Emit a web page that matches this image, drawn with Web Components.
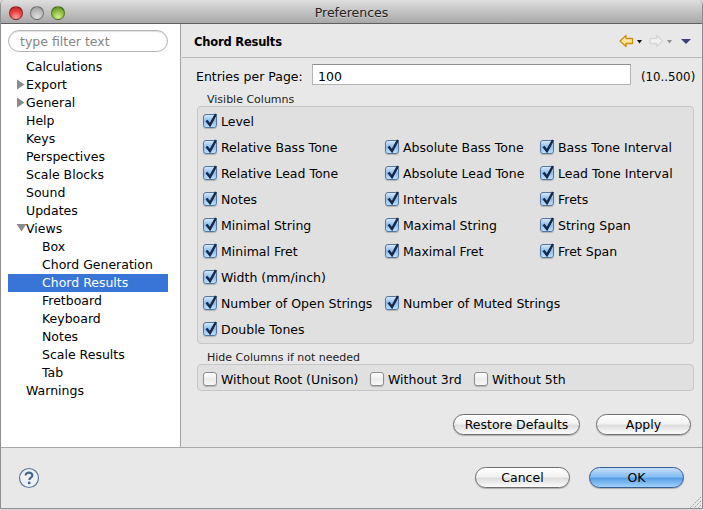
<!DOCTYPE html>
<html>
<head>
<meta charset="utf-8">
<title>Preferences</title>
<style>
  html, body { margin: 0; padding: 0; background: #fff; }
  body { font-family: "DejaVu Sans", sans-serif; font-size: 12.5px; color: #000; }
</style>
</head>
<body>
<pref-window>
  <pref-tree slot="tree"></pref-tree>
  <pref-group label="Visible Columns" slot="visible" cols="182px 155px 1fr" rowh="26" pad="1px 5px">
    <pref-check checked style="grid-column: 1 / -1">Level</pref-check>
    <pref-check checked>Relative Bass Tone</pref-check>
    <pref-check checked>Absolute Bass Tone</pref-check>
    <pref-check checked>Bass Tone Interval</pref-check>
    <pref-check checked>Relative Lead Tone</pref-check>
    <pref-check checked>Absolute Lead Tone</pref-check>
    <pref-check checked>Lead Tone Interval</pref-check>
    <pref-check checked>Notes</pref-check>
    <pref-check checked>Intervals</pref-check>
    <pref-check checked>Frets</pref-check>
    <pref-check checked>Minimal String</pref-check>
    <pref-check checked>Maximal String</pref-check>
    <pref-check checked>String Span</pref-check>
    <pref-check checked>Minimal Fret</pref-check>
    <pref-check checked>Maximal Fret</pref-check>
    <pref-check checked>Fret Span</pref-check>
    <pref-check checked style="grid-column: 1 / -1">Width (mm/inch)</pref-check>
    <pref-check checked>Number of Open Strings</pref-check>
    <pref-check checked style="grid-column: 2 / -1">Number of Muted Strings</pref-check>
    <pref-check checked style="grid-column: 1 / -1">Double Tones</pref-check>
  </pref-group>
  <pref-group label="Hide Columns if not needed" slot="hide" cols="167px 104px 1fr" rowh="22" pad="3px 5px 0" style="margin-top: 6px">
    <pref-check>Without Root (Unison)</pref-check>
    <pref-check>Without 3rd</pref-check>
    <pref-check>Without 5th</pref-check>
  </pref-group>
</pref-window>

<script>
// window chrome: title bar, sidebar slot, page slot, footer
class PrefWindow extends HTMLElement {
  constructor() {
    super();
    const shadow = this.attachShadow({ mode: 'open' });
    shadow.innerHTML = `
      <style>
        :host { display: flex; flex-direction: column; width: 703px; height: 510px; overflow: hidden; background: #d8d8d8; box-sizing: border-box; }
        .frame { display: flex; flex-direction: column; height: 509px; box-sizing: border-box; border: 1px solid #8e8e8e; border-top: 0; border-radius: 5px 5px 0 0; background: #e8e8e8; overflow: hidden; }
        .title { height: 22px; flex: none; box-sizing: content-box; padding-top: 1px; margin-bottom: -1px; display: flex; align-items: center; justify-content: center; position: relative;
          background: linear-gradient(#dedede, #a8a8a8); border-bottom: 1px solid #5f5f5f; font-size: 12.5px; color: #222; text-shadow: 0 1px 0 rgba(255,255,255,.35); }
        .lights { position: absolute; left: 8px; top: 6px; display: flex; gap: 7px; }
        .lights i { width: 14px; height: 14px; border-radius: 50%; display: block; box-sizing: border-box; border: 1px solid rgba(0,0,0,.35); }
        .red { background: radial-gradient(circle at 50% 85%, #ffa6a6 0, #ee4a4a 45%, #b51717 100%); }
        .grey { background: radial-gradient(circle at 50% 85%, #dedede 0, #bdbdbd 50%, #8f8f8f 100%); }
        .green { background: radial-gradient(circle at 50% 85%, #d2f08c 0, #8fc040 50%, #4f7f1d 100%); }
        .main { flex: 1; display: flex; min-height: 0; }
        .side { width: 179px; flex: none; background: #fff; border-right: 1px solid #a3a3a3; }
        .page { flex: 1; min-width: 0; margin-left: 1px; display: flex; flex-direction: column; }
        .head { height: 35px; flex: none; box-sizing: border-box; border-bottom: 1px solid #b9b9b9; display: flex; align-items: center; padding: 4px 9px 0 12px; }
        .head b { font-size: 11.5px; letter-spacing: -0.2px; flex: 1; }
        .nav { display: flex; align-items: center; margin-bottom: 2px; }
        .form { flex: 1; padding: 6px 8px 0 15px; display: flex; flex-direction: column; }
        .entries { display: flex; align-items: center; height: 21px; }
        .entries label { width: 116px; margin-left: -1px; flex: none; padding-top: 4px; }
        .entries input { width: 319px; flex: none; height: 21px; box-sizing: border-box; font: inherit; border: 1px solid #b4b4b4; border-top-color: #8f8f8f; background: #fff; padding: 4px 0 0 5px; margin: 0; border-radius: 0; outline: 0; }
        .entries span { margin-left: 10px; font-size: 11.8px; padding-top: 4px; white-space: nowrap; }
        .actions { display: flex; justify-content: flex-end; gap: 16px; margin-top: 23px; padding-right: 3px; }
        .foot { height: 61px; flex: none; box-sizing: border-box; border-top: 1px solid #a9a9a9; display: flex; align-items: center; padding: 0 18px 1px 17px; position: relative; }
        .foot .sp { flex: 1; }
        .foot .help { margin-top: 1px; }
        .foot pref-button + pref-button { margin-left: 19px; }
        .grip { position: absolute; right: 0; bottom: 0; }
      </style>
      <div class="frame">
        <div class="title">
          <div class="lights"><i class="red"></i><i class="grey"></i><i class="green"></i></div>
          Preferences
        </div>
        <div class="main">
          <div class="side"><slot name="tree"></slot></div>
          <div class="page">
            <div class="head">
              <b>Chord Results</b>
              <div class="nav">
                <svg width="74" height="14" viewBox="0 0 74 14">
                  <defs><linearGradient id="gold" x1="0" y1="0" x2="0" y2="1"><stop offset="0" stop-color="#fff3c4"/><stop offset="1" stop-color="#fbd97a"/></linearGradient></defs>
                  <path d="M1 7 L7 1.5 V4.5 H13.5 V9.5 H7 V12.5 Z" fill="url(#gold)" stroke="#c98f12" stroke-width="1.3" stroke-linejoin="round"/>
                  <path d="M18 6 h5 l-2.5 3.5 z" fill="#111"/>
                  <path d="M43.5 7 L37.5 1.5 V4.5 H31 V9.5 H37.5 V12.5 Z" fill="#f2f2f2" stroke="#d6d6d6" stroke-width="1.3" stroke-linejoin="round"/>
                  <path d="M48 6 h5 l-2.5 3.5 z" fill="#8f8f8f"/>
                  <path d="M62 5 h10 l-5 5 z" fill="#3d3f78"/>
                </svg>
              </div>
            </div>
            <div class="form">
              <div class="entries"><label>Entries per Page:</label><input value="100"><span>(10..500)</span></div>
              <slot name="visible"></slot>
              <slot name="hide"></slot>
              <div class="actions"><pref-button width="127">Restore Defaults</pref-button><pref-button width="95">Apply</pref-button></div>
            </div>
          </div>
        </div>
        <div class="foot">
          <svg class="help" width="22" height="22" viewBox="0 0 22 22">
            <circle cx="11" cy="11" r="9.5" fill="#eef1f4" stroke="#5d7a9b" stroke-width="1.2"/>
            <path d="M7.6 8.6 C7.6 6.6 9.2 5.6 11 5.6 C13 5.6 14.4 6.8 14.4 8.5 C14.4 10.6 11.3 10.8 11.3 13" fill="none" stroke="#46678c" stroke-width="2.1"/>
            <circle cx="11.2" cy="15.9" r="1.4" fill="#46678c"/>
          </svg>
          <div class="sp"></div>
          <pref-button width="95">Cancel</pref-button>
          <pref-button width="95" default>OK</pref-button>
          <svg class="grip" width="13" height="12" viewBox="0 0 13 12">
            <path d="M12 1 L1 12 M12 5 L5 12 M12 9 L9 12" stroke="#979797" stroke-dasharray="1.4 1" fill="none"/>
          </svg>
        </div>
      </div>`;
  }
}

// sidebar: filter field and the preference tree
class PrefTree extends HTMLElement {
  constructor() {
    super();
    const shadow = this.attachShadow({ mode: 'open' });
    const items = [
      ['Calculations', 1], ['Export', 1, 'closed'], ['General', 1, 'closed'], ['Help', 1], ['Keys', 1],
      ['Perspectives', 1], ['Scale Blocks', 1], ['Sound', 1], ['Updates', 1], ['Views', 1, 'open'],
      ['Box', 2], ['Chord Generation', 2], ['Chord Results', 2, 'sel'], ['Fretboard', 2], ['Keyboard', 2],
      ['Notes', 2], ['Scale Results', 2], ['Tab', 2], ['Warnings', 1]
    ];
    const rows = items.map(([name, level, kind]) => {
      let arrow = '';
      if (kind === 'closed') arrow = '<svg class="arrow" width="9" height="11" viewBox="0 0 9 11"><path d="M1 0.5 L8.5 5.5 L1 10.5 Z" fill="#8b8b8b"/></svg>';
      if (kind === 'open') arrow = '<svg class="arrow" width="11" height="9" viewBox="0 0 11 9"><path d="M0.5 1 H10.5 L5.5 8.5 Z" fill="#8b8b8b"/></svg>';
      return `<div class="row l${level} ${kind === 'sel' ? 'sel' : ''}">${arrow}<span>${name}</span></div>`;
    }).join('');
    shadow.innerHTML = `
      <style>
        :host { display: block; padding: 7px 12px 0 7px; }
        .filter { height: 22px; box-sizing: border-box; border: 1px solid #b5b5b5; border-radius: 11px; padding: 0 0 0 11px; line-height: 22px; color: #858585; font-size: 12.5px; box-shadow: inset 0 1px 1px rgba(0,0,0,.12); margin-bottom: 6px; }
        .row { height: 18px; line-height: 18px; position: relative; white-space: nowrap; }
        .l1 { padding-left: 18px; }
        .l2 { padding-left: 34px; }
        .sel { background: #3875d7; color: #fff; }
        .arrow { position: absolute; left: 8px; top: 3px; }
      </style>
      <div class="filter">type filter text</div>
      ${rows}`;
  }
}

class PrefGroup extends HTMLElement {
  constructor() {
    super();
    const shadow = this.attachShadow({ mode: 'open' });
    const label = this.getAttribute('label') || '';
    const cols = this.getAttribute('cols') || '1fr';
    const rowh = this.getAttribute('rowh') || '26';
    const pad = this.getAttribute('pad') || '1px 5px';
    shadow.innerHTML = `
      <style>
        :host { display: block; margin-top: 7px; }
        .cap { font-size: 11px; height: 14px; line-height: 16px; padding-left: 10px; color: #222; }
        .box { display: grid; grid-template-columns: ${cols}; grid-auto-rows: ${rowh}px; padding: ${pad}; border: 1px solid #c6c6c6; border-radius: 4px; background: #e0e0e0; }
      </style>
      <div class="cap">${label}</div>
      <div class="box"><slot></slot></div>`;
  }
}

class PrefCheck extends HTMLElement {
  constructor() {
    super();
    const shadow = this.attachShadow({ mode: 'open' });
    const on = this.hasAttribute('checked');
    shadow.innerHTML = `
      <style>
        :host { display: flex; align-items: center; white-space: nowrap; }
        .cb { width: 14px; height: 14px; flex: none; box-sizing: border-box; border: 1px solid ${on ? '#55779f' : '#8e8e8e'}; border-radius: 3px; position: relative; margin-right: 4px;
          background: ${on ? 'linear-gradient(#d6e8fa, #8dbcea 50%, #bfe0fb)' : 'linear-gradient(#fff, #ececec 50%, #f7f7f7)'}; box-shadow: 0 1px 1px rgba(0,0,0,.2); }
        svg { position: absolute; left: -1px; top: -3px; }
      </style>
      <span class="cb">${on ? '<svg width="15" height="16" viewBox="0 0 15 16"><path d="M3.5 8.5 L7 13 L13 2" fill="none" stroke="#16294a" stroke-width="2.5"/></svg>' : ''}</span>
      <slot></slot>`;
  }
}

class PrefButton extends HTMLElement {
  constructor() {
    super();
    const shadow = this.attachShadow({ mode: 'open' });
    const w = this.getAttribute('width') || '95';
    const def = this.hasAttribute('default');
    shadow.innerHTML = `
      <style>
        :host { display: block; width: ${w}px; height: 21px; box-sizing: border-box; border: 1px solid ${def ? '#345c94' : '#6e6e6e'}; border-radius: 11px; text-align: center; line-height: 19px; white-space: nowrap; font-size: 12.5px;
          background: ${def ? 'linear-gradient(#c6e0fb, #86bdf2 45%, #5a9fe6 55%, #9fd2fb)' : 'linear-gradient(#fff, #f3f3f3 45%, #dedede 55%, #fbfbfb)'}; box-shadow: 0 1px 1px rgba(0,0,0,.25); }
      </style>
      <slot></slot>`;
  }
}

customElements.define('pref-window', PrefWindow);
customElements.define('pref-tree', PrefTree);
customElements.define('pref-group', PrefGroup);
customElements.define('pref-check', PrefCheck);
customElements.define('pref-button', PrefButton);
</script>
</body>
</html>
